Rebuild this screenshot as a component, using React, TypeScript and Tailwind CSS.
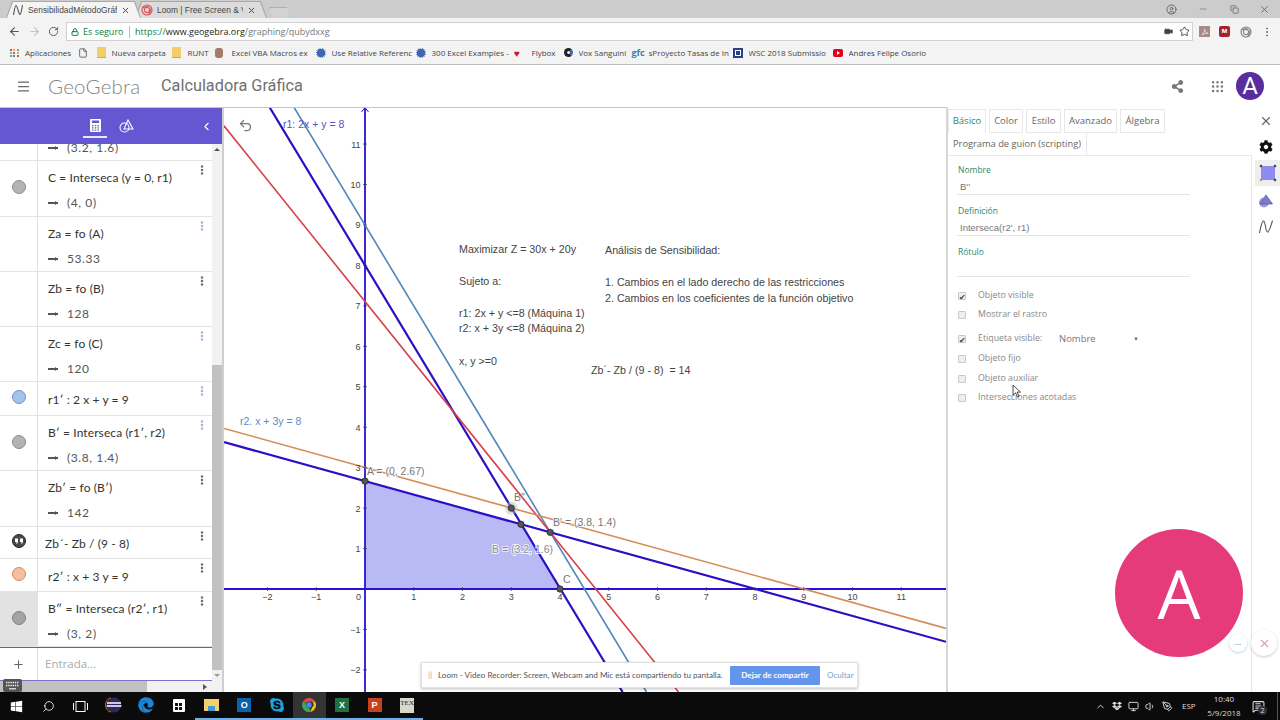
import { ChevronLeft, ChevronUp, EllipsisVertical, File, Lock, Menu, Minus, Plus, RotateCw, Search, Star, Undo2, Video, Volume1, X, ArrowLeft, ArrowRight, Monitor, Grip, PenTool, Copy, CircleUser, MessageSquareText } from "lucide-react";
import { FaCog, FaDropbox, FaEdge, FaShareAlt, FaSkype, FaWindows } from "react-icons/fa";
import type { ReactNode } from "react";

const sans = "font-['Open_Sans',sans-serif]";
const arial = "font-['Liberation_Sans',sans-serif]";
const lato = "font-['Lato',sans-serif]";

// graph scale, in page pixels
const px = (x: number) => 365 + 48.75 * x;
const py = (y: number) => 589 - 40.45 * y;

function LoomMark({ size = 12, color = "#e0565b" }: { size?: number; color?: string }) {
  return (
    <svg width={size} height={size} viewBox="0 0 12 12" fill="none" stroke={color} strokeWidth="1.2">
      <circle cx="6" cy="6" r="5" />
      <circle cx="6" cy="6" r="2.6" />
      <path d="M1.5 4 8 1.6M10.5 4 8 10.4" />
    </svg>
  );
}

function GgbCurve({ size = 12, color = "#555" }: { size?: number; color?: string }) {
  return (
    <svg width={size} height={size} viewBox="0 0 12 12" fill="none" stroke={color} strokeWidth="1.1">
      <path d="M1.5 11C2.5 5 3 1.5 4 1.5c1.5 0 2.5 9 4 9 1 0 1.5-4 2.5-9.5" />
    </svg>
  );
}

function BrowserTab({ title, wide, active, icon }: { title: string; wide: string; active?: boolean; icon: ReactNode }) {
  return (
    <div className={`${wide} h-[17px] -mr-[6px] bg-[#a9a9a9] p-[1px] pb-0 [clip-path:polygon(0_100%,6px_0,calc(100%-6px)_0,100%_100%)] ${active ? "z-10" : ""}`}>
      <div className={`h-full flex items-center pl-[5px] pr-[10px] gap-[4px] [clip-path:polygon(0_100%,6px_0,calc(100%-6px)_0,100%_100%)] ${active ? "bg-[#f4f4f4]" : "bg-[#dcdcdc]"}`}>
        {icon}
        <span className={`flex-1 whitespace-nowrap overflow-hidden text-[8.4px] text-[#444] ${arial}`}>{title}</span>
        <X size={9} strokeWidth={2.5} className="text-[#444]" />
      </div>
    </div>
  );
}

function TitleBar() {
  return (
    <div className={`h-[18px] bg-[#cccccc] flex items-end pl-[6px] ${sans}`}>
      <BrowserTab active wide="w-[135px]" title="SensibilidadMétodoGráfi" icon={<GgbCurve />} />
      <BrowserTab wide="w-[132px]" title="Loom | Free Screen & Vid" icon={<LoomMark />} />
      <div className="ml-[8px] w-[21px] h-[11px] border border-b-0 border-[#b0b0b0] bg-[#d2d2d2] [clip-path:polygon(0_0,85%_0,100%_100%,15%_100%)]" />
      <div className="ml-auto flex items-center self-stretch text-[#666]">
        <CircleUser size={11} />
        <Minus size={10} className="ml-[21px] text-[#888]" />
        <Copy size={9} className="ml-[22px]" strokeWidth={2} />
        <X size={11} className="ml-[20px] mr-[10px]" />
      </div>
    </div>
  );
}

function AddressBar() {
  return (
    <div className={`h-[23px] pt-[4px] bg-[#f3f3f3] flex items-center ${sans}`}>
      <ArrowLeft size={13} className="ml-[8px] text-[#555]" />
      <ArrowRight size={13} className="ml-[7px] text-[#c4c4c4]" />
      <RotateCw size={11} className="ml-[7px] text-[#555]" />
      <div className="ml-[7px] w-[1127px] h-[19px] bg-white border border-[#d0d0d0] flex items-center pl-[3px] text-[9px]">
        <Lock size={8} strokeWidth={3} className="text-[#0b8043] ml-[1px]" />
        <span className="ml-[4px] text-[#0b8043] w-[46px] whitespace-nowrap">Es seguro</span>
        <span className="w-px h-[12px] bg-[#bbb]" />
        <span className="ml-[5px] whitespace-nowrap">
          <span className="text-[#0b8043]">https://</span>
          <span className="text-[#222]">www.geogebra.org</span>
          <span className="text-[#777]">/graphing/qubydxxg</span>
        </span>
        <Video size={9} fill="#444" className="ml-auto text-[#444]" />
        <Star size={11} className="ml-[6px] mr-[2px] text-[#444]" />
      </div>
      <div className="ml-[6px] w-[11px] h-[11px] bg-[#a98a8a] flex items-center justify-center">
        <svg width="8" height="8" viewBox="0 0 8 8" fill="none" stroke="#eee" strokeWidth="0.7"><path d="M1 7C3 5 4 2 3.6 1 3 2 5 5 7 5.2 5 5 2.5 6 1 7z" /></svg>
      </div>
      <div className="ml-[9px] w-[11px] h-[11px] rounded-[2px] bg-[#a81f2d] text-white text-[7px] leading-[10px] font-bold text-center">м</div>
      <div className="ml-[10px]"><LoomMark size={12} color="#888" /></div>
      <EllipsisVertical size={12} className="ml-[9px] text-[#666]" />
    </div>
  );
}

const appDots = ["#d9534f", "#f0ad4e", "#5cb85c", "#5bc0de", "#d9534f", "#f0ad4e", "#5cb85c", "#428bca", "#d9534f"];

function Folder() {
  return <span className="block w-[9px] h-[11px] bg-[#f5cd6c] border-b border-[#d6a93f]" />;
}
function BlueSeal() {
  return <span className="block w-[10px] h-[10px] rounded-full bg-[#3f66b0] border border-dotted border-white" />;
}

const bookmarks: { label: string; box: string; text: string; icon: ReactNode }[] = [
  { label: "", box: "w-[18px]", text: "w-0", icon: <File size={10} className="text-[#555]" /> },
  { label: "Nueva carpeta", box: "w-[75px]", text: "ml-[4px] w-[56px]", icon: <Folder /> },
  { label: "RUNT", box: "w-[43px]", text: "ml-[5px] w-[24px]", icon: <Folder /> },
  { label: "Excel VBA Macros ex", box: "w-[102px]", text: "ml-[6px] w-[80px]", icon: <span className="block w-[8px] h-[10px] bg-[#a07c68] rounded-[3px]" /> },
  { label: "Use Relative Referenc", box: "w-[100px]", text: "ml-[4px] w-[82px]", icon: <BlueSeal /> },
  { label: "300 Excel Examples -", box: "w-[96px]", text: "ml-[4px] w-[78px]", icon: <BlueSeal /> },
  { label: "Flybox", box: "w-[51px]", text: "ml-[8px] w-[30px]", icon: <span className="text-[#c9143a] text-[10px] leading-none">♥</span> },
  { label: "Vox Sanguini", box: "w-[70px]", text: "ml-[4px] w-[52px]", icon: <span className="block w-[9px] h-[9px] rounded-full border-[3px] border-[#222] border-r-[#3f66b0]" /> },
  { label: "sProyecto Tasas de In", box: "w-[100px]", text: "ml-[4px] w-[82px]", icon: <span className="text-[#2d7fc1] text-[9px] font-bold leading-none">gfc</span> },
  { label: "WSC 2018 Submissio", box: "w-[100px]", text: "ml-[4px] w-[82px]", icon: <span className="block w-[10px] h-[10px] bg-[#26408b] border-x-2 border-[#26408b] outline outline-1 -outline-offset-3 outline-white" /> },
  { label: "Andres Felipe Osorio", box: "w-[96px]", text: "ml-[4px] w-[79px]", icon: <span className="w-[10px] h-[8px] rounded-[2px] bg-[#e3001b] flex items-center justify-center"><span className="w-0 h-0 border-y-[2px] border-y-transparent border-l-[3px] border-l-white" /></span> },
];

function BookmarksBar() {
  return (
    <div className={`h-[24px] bg-[#f3f3f3] border-b border-[#bdbdbd] flex items-center pl-[10px] text-[8px] text-[#444] ${sans}`}>
      <span className="grid grid-cols-3 gap-[1px] w-[9px]">
        {appDots.map((c, i) => (
          <span key={i} className="block w-[2px] h-[2px]" style={{ background: c }} />
        ))}
      </span>
      <span className="ml-[6px] w-[51.5px] whitespace-nowrap">Aplicaciones</span>
      {bookmarks.map((b, i) => (
        <div key={i} className={`${b.box} flex items-center shrink-0`}>
          <span className="w-[13px] shrink-0 flex justify-center">{b.icon}</span>
          {b.label && <span className={`${b.text} overflow-hidden whitespace-nowrap`}>{b.label}</span>}
        </div>
      ))}
    </div>
  );
}

function AppHeader() {
  return (
    <div className="h-[42px] bg-white flex items-center">
      <Menu size={15} className="ml-[16px] text-[#666]" />
      <span className={`ml-[17px] w-[113px] text-[20.5px] text-[#858585] font-light tracking-[0.2px] ${lato}`}>GeoGebra</span>
      <span className="text-[16.3px] text-[#707070] font-['Roboto',sans-serif]">Calculadora Gráfica</span>
      <FaShareAlt size={13} className="ml-auto text-[#777]" />
      <Grip size={15} className="ml-[26px] text-[#777]" />
      <div className="ml-[11px] mr-[16px] w-[28px] h-[28px] rounded-full bg-[#5a2d9c] text-white text-[24px] font-['Roboto',sans-serif] flex items-center justify-center">A</div>
    </div>
  );
}

type Row = {
  h: string;
  marble?: string;
  lines: string[];
  pale?: boolean;
  selected?: boolean;
  pl?: string;
  quote?: boolean;
};

const rows: Row[] = [
  { h: "h-[56px]", marble: "bg-[#b3b3b3] border-[#8c8c8c]", lines: ["C = Interseca (y = 0, r1)", "(4, 0)"] },
  { h: "h-[55px]", lines: ["Za = fo (A)", "53.33"], pale: true },
  { h: "h-[55px]", lines: ["Zb = fo (B)", "128"] },
  { h: "h-[55px]", lines: ["Zc = fo (C)", "120"], pale: true },
  { h: "h-[34px]", marble: "bg-[#a5c3ea] border-[#6f92c7]", lines: ["r1′ :  2 x + y = 9"], pale: true },
  { h: "h-[55px]", marble: "bg-[#b3b3b3] border-[#8c8c8c]", lines: ["B′ = Interseca (r1′, r2)", "(3.8, 1.4)"], pale: true },
  { h: "h-[56px]", lines: ["Zb′ = fo (B′)", "142"] },
  { h: "h-[32px]", quote: true, lines: ["Zb´- Zb  /  (9 - 8)"], pl: "pl-[7px]" },
  { h: "h-[33px]", marble: "bg-[#f3bfa3] border-[#d58a55]", lines: ["r2′ :  x + 3 y = 9"] },
  { h: "h-[55px]", marble: "bg-[#a3a3a3] border-[#808080]", lines: ["B″ = Interseca (r2′, r1)", "(3, 2)"], selected: true },
];

function Output({ value }: { value: string }) {
  return (
    <div className="h-[18px] flex items-center">
      <span className="w-[10px] h-[1.5px] bg-[#555] relative">
        <span className="absolute right-0 -top-[1px] w-0 h-0 border-y-[2px] border-y-transparent border-l-[3px] border-l-[#555]" />
      </span>
      <span className="ml-[9px] text-[#555] tracking-[0.6px]">{value}</span>
    </div>
  );
}

function AlgebraRow({ row }: { row: Row }) {
  const double = row.lines.length > 1;
  return (
    <div className={`${row.h} flex border-b border-[#e4e4e4]`}>
      <div className={`w-[38px] shrink-0 border-r border-[#e0e0e0] flex items-center justify-center ${row.selected ? "bg-[#e2e2e2]" : ""}`}>
        {row.marble && <span className={`block w-[14px] h-[14px] rounded-full border mb-[3px] ${row.marble}`} />}
        {row.quote && (
          <svg className="mb-[3px]" width="14" height="14" viewBox="0 0 14 14">
            <circle cx="7" cy="7" r="6.5" fill="#4a4a4a" stroke="#222" />
            <path d="M3 4.5h3v3c0 1.2-.6 2-1.6 2.3l-.3-.8c.5-.2.7-.5.7-1H3zM8 4.5h3v3c0 1.2-.6 2-1.6 2.3l-.3-.8c.5-.2.7-.5.7-1H8z" fill="#fff" />
          </svg>
        )}
      </div>
      <div className={`flex-1 flex flex-col text-[12px] text-[#333] whitespace-nowrap ${lato} ${row.pl ?? "pl-[10px]"} ${double ? "pt-[8px] gap-[7px]" : "justify-center pt-[3px]"}`}>
        {row.lines.map((l, i) => (i === 1 ? <Output key={i} value={l} /> : <div key={i} className="h-[18px] leading-[18px] tracking-[0.1px]">{l}</div>))}
      </div>
      <EllipsisVertical size={12} strokeWidth={3} className={`mt-[3px] mr-[4px] shrink-0 ${row.pale ? "text-[#a9a6de]" : "text-[#666]"}`} />
    </div>
  );
}

function AlgebraPanel() {
  return (
    <div className={`w-[224px] shrink-0 flex flex-col border-t border-[#c6c6c6] border-r-2 border-r-[#cfcfcf] bg-white ${sans}`}>
      <div className="h-[36px] bg-[#6557d2] flex items-start text-white shrink-0">
        <div className="ml-[83px] w-[24px] h-[30px] border-b-2 border-[#e8e6fa] flex items-center justify-center pt-[6px]">
          <svg width="11" height="13" viewBox="0 0 11 13">
            <rect width="11" height="13" rx="1" fill="#fff" />
            <rect x="2" y="1.5" width="7" height="2.5" fill="#6557d2" />
            <path d="M2 6h1.5v1.3H2zM4.8 6h1.5v1.3H4.8zM7.5 6H9v1.3H7.5zM2 8.2h1.5v1.3H2zM4.8 8.2h1.5v1.3H4.8zM7.5 8.2H9v1.3H7.5zM2 10.4h1.5v1.3H2zM4.8 10.4h1.5v1.3H4.8zM7.5 10.4H9v1.3H7.5z" fill="#6557d2" />
          </svg>
        </div>
        <svg className="ml-[12px] mt-[11px]" width="15" height="14" viewBox="0 0 15 14" fill="none" stroke="white" strokeWidth="1.1">
          <circle cx="5.5" cy="8.5" r="4.5" />
          <path d="M9 1 14 10H5z" />
        </svg>
        <ChevronLeft size={13} className="ml-[66px] mt-[12px]" />
      </div>
      <div className="flex-1 flex min-h-0">
        <div className="w-[212px] flex flex-col">
          <div className="h-[17px] flex border-b border-[#e4e4e4] overflow-hidden">
            <div className="w-[38px] border-r border-[#e0e0e0]" />
            <div className={`pl-[10px] text-[12px] -mt-[5px] ${lato}`}><Output value="(3.2, 1.6)" /></div>
          </div>
          {rows.map((r, i) => (
            <AlgebraRow key={i} row={r} />
          ))}
          <div className="h-[34px] flex border-y border-[#7c72c8] border-t-[#6557d2]">
            <div className="w-[38px] border-r border-[#e0e0e0] flex items-center justify-center text-[#666]"><Plus size={13} /></div>
            <div className="pl-[7px] flex items-center text-[11.5px] text-[#aaa]">Entrada...</div>
          </div>
          <div className="flex-1 bg-[#f1f1f1] flex items-center">
            <div className="w-[147px] h-full bg-[#c1c1c1]" />
            <span className="ml-auto mr-[5px] w-0 h-0 border-y-[3px] border-y-transparent border-l-[4px] border-l-[#555]" />
          </div>
        </div>
        <div className="w-[10px] bg-[#f1f1f1] flex flex-col items-center">
          <span className="mt-[4px] w-0 h-0 border-x-[3px] border-x-transparent border-b-[3px] border-b-[#555]" />
          <div className="mt-[214px] w-[10px] h-[305px] bg-[#c1c1c1]" />
          <span className="mt-[4px] w-0 h-0 border-x-[3px] border-x-transparent border-t-[3px] border-t-[#999]" />
        </div>
      </div>
    </div>
  );
}

const xTicks = [-2, -1, 1, 2, 3, 4, 5, 6, 7, 8, 9, 10, 11];
const yTicks = [-2, -1, 1, 2, 3, 4, 5, 6, 7, 8, 9, 10, 11];

const notes: [string, number, number][] = [
  ["Maximizar Z = 30x + 20y", 459, 253],
  ["Sujeto a:", 459, 285],
  ["r1: 2x + y <=8 (Máquina 1)", 459, 317],
  ["r2: x + 3y <=8 (Máquina 2)", 459, 332],
  ["x, y >=0", 459, 365],
  ["Análisis de Sensibilidad:", 605, 254],
  ["1. Cambios en el lado derecho de las restricciones", 605, 286],
  ["2. Cambios en los coeficientes de la función objetivo", 605, 302],
  ["Zb´- Zb / (9 - 8)  = 14", 591, 374],
];

const dots: [number, number][] = [[0, 2.667], [3.2, 1.6], [3.8, 1.4], [4, 0]];

function Graph() {
  return (
    <div className="flex-1 relative border-t border-[#c6c6c6] bg-white overflow-hidden">
      <svg className={`block w-full h-full ${arial}`} viewBox="224 108 722 584">
        <polygon points={`${px(0)},${py(0)} ${px(0)},${py(2.667)} ${px(3.2)},${py(1.6)} ${px(4)},${py(0)}`} fill="#b9b9f6" />
        <line x1="224" y1={py(0)} x2="946" y2={py(0)} stroke="#2a10d8" strokeWidth="1.8" />
        <line x1={px(0)} y1="107" x2={px(0)} y2="692" stroke="#2a10d8" strokeWidth="1.8" />
        <path d="M361.5 112 365 107.5 368.5 112" fill="none" stroke="#2a10d8" strokeWidth="1" />
        <line x1={px(-1.96)} y1="107" x2="622.6" y2="692" stroke="#2a10c4" strokeWidth="2.2" />
        <line x1={px(-1.46)} y1="107" x2="646.5" y2="692" stroke="#4f86b8" strokeWidth="1.6" />
        <line x1="224" y1={py(11.45)} x2="678.5" y2="692" stroke="#d8404a" strokeWidth="1.6" />
        <line x1="224" y1={py(3.63)} x2="946" y2="641.8" stroke="#2a10c4" strokeWidth="2.2" />
        <line x1="224" y1={py(3.97)} x2="946" y2="628.4" stroke="#d68b58" strokeWidth="1.6" />

        {xTicks.map((t) => (
          <g key={t}>
            <line x1={px(t)} y1={py(0) - 2} x2={px(t)} y2={py(0) + 2} stroke="#333" strokeWidth="0.7" />
            <text x={px(t)} y="600" textAnchor="middle" fontSize="9" fill="#444">{t < 0 ? `−${-t}` : t}</text>
          </g>
        ))}
        <text x="358.5" y="600" textAnchor="middle" fontSize="9" fill="#444">0</text>
        {yTicks.map((t) => (
          <g key={t}>
            <line x1={px(0) - 2} y1={py(t)} x2={px(0) + 2} y2={py(t)} stroke="#333" strokeWidth="0.7" />
            <text x="360.5" y={py(t) + 3.5} textAnchor="end" fontSize="9" fill="#444">{t < 0 ? `−${-t}` : t}</text>
          </g>
        ))}

        <text x="283" y="128" fontSize="10.5" fill="#5a4fd0">r1: 2x + y = 8</text>
        <text x="240" y="425" fontSize="10.5" fill="#5b8cc0">r2. x + 3y = 8</text>
        {notes.map(([t, x, y]) => (
          <text key={t} x={x} y={y} fontSize="10.7" fill="#444" xmlSpace="preserve">{t}</text>
        ))}

        <text x="367" y="475" fontSize="10.5" fill="#777" stroke="#fff" strokeWidth="1.4" paintOrder="stroke">A = (0, 2.67)</text>
        <text x="514" y="501" fontSize="10.5" fill="#777">B″</text>
        <text x="553" y="526" fontSize="10.5" fill="#777" stroke="#fff" strokeWidth="1.4" paintOrder="stroke">B′ = (3.8, 1.4)</text>
        <text x="492" y="553" fontSize="10.5" fill="#8a8a8a" stroke="#fff" strokeWidth="1.4" paintOrder="stroke">B = (3.2, 1.6)</text>
        <text x="563" y="583" fontSize="10.5" fill="#777">C</text>

        <circle cx={px(3)} cy={py(2)} r="6.5" fill="#bdbdbd" fillOpacity="0.45" />
        <circle cx={px(3)} cy={py(2)} r="3.2" fill="#555" stroke="#222" strokeWidth="0.7" />
        {dots.map(([x, y]) => (
          <circle key={x} cx={px(x)} cy={py(y)} r="3.2" fill="#555" stroke="#222" strokeWidth="0.7" />
        ))}
      </svg>
      <Undo2 size={15} className="absolute left-[14px] top-[10px] text-[#777]" />
      <div className={`absolute left-[197px] top-[554px] w-[437px] h-[26px] bg-white border border-[#e2e2e2] shadow-[0_1px_3px_rgba(0,0,0,0.25)] flex items-center text-[8.1px] text-[#555] ${lato}`}>
        <span className="ml-[6px] w-[10px] text-[#aaa]">||</span>
        <span className="w-[285px] whitespace-nowrap">Loom - Video Recorder: Screen, Webcam and Mic está compartiendo tu pantalla.</span>
        <span className="ml-[7px] w-[90px] h-[19px] rounded-[1px] bg-[#6495ed] text-white font-bold flex items-center justify-center">Dejar de compartir</span>
        <span className="ml-[7px] text-[#7c9ccb]">Ocultar</span>
      </div>
    </div>
  );
}

const tabs: { label: string; w: string; active?: boolean }[] = [
  { label: "Básico", w: "w-[38px]", active: true },
  { label: "Color", w: "w-[34px]" },
  { label: "Estilo", w: "w-[35px]" },
  { label: "Avanzado", w: "w-[53px]" },
  { label: "Álgebra", w: "w-[45px]" },
];

function Field({ label, value }: { label: string; value?: string }) {
  return (
    <div className="mb-[10px]">
      <div className="h-[12px] ml-[1px] leading-[12px] text-[8.5px] text-[#2a8a6c]">{label}</div>
      <div className={`h-[17px] mt-[2px] w-[233px] border-b border-[#e4e4e4] pl-[3px] pt-[2px] text-[9.5px] leading-[14px] text-[#777] ${arial}`}>{value}</div>
    </div>
  );
}

const checks: { label: string; mt: string; on?: boolean }[] = [
  { label: "Objeto visible", mt: "mt-[13px]", on: true },
  { label: "Mostrar el rastro", mt: "mt-[7px]" },
  { label: "Etiqueta visible:", mt: "mt-[12px]", on: true },
  { label: "Objeto fijo", mt: "mt-[8px]" },
  { label: "Objeto auxiliar", mt: "mt-[8px]" },
  { label: "Intersecciones acotadas", mt: "mt-[7px]" },
];

function PropertiesPanel() {
  return (
    <div className={`flex-1 flex bg-white border-l-2 border-[#d6d6d6] relative ${sans}`}>
      <div className="w-[304px] flex flex-col">
        <div className="flex h-[26px] gap-[3px] pt-[2px]">
          {tabs.map((t) => (
            <div key={t.label} className={`${t.w} border border-[#e8e8e8] flex items-center justify-center text-[9.5px] ${t.active ? "text-[#1f8a68] border-b-white" : "text-[#666]"}`}>
              {t.label}
            </div>
          ))}
        </div>
        <div className="h-[22px] w-[139px] border-r border-[#e8e8e8] flex items-center pl-[5px] text-[9.3px] text-[#666] whitespace-nowrap">Programa de guion (scripting)</div>
        <div className="flex-1 border-t border-r border-[#e8e8e8] pl-[9px] pt-[8px]">
          <Field label="Nombre" value="B''" />
          <Field label="Definición" value="Interseca(r2', r1)" />
          <Field label="Rótulo" />
          {checks.map((c) => (
            <div key={c.label} className={`${c.mt} h-[12px] flex items-center text-[8.8px] text-[#888]`}>
              <span className="w-[8px] h-[8px] mr-[12px] ml-[1px] rounded-[1px] border border-[#c9c9c9] bg-[#eeeeee] text-[8px] leading-[7px] text-[#444] text-center">{c.on ? "✔" : ""}</span>
              <span className="w-[81px] whitespace-nowrap">{c.label}</span>
              {c.on && c.label.startsWith("Etiqueta") && (
                <span className="w-[80px] flex items-center text-[9.5px] text-[#777]">Nombre<span className="ml-auto text-[6px]">▼</span></span>
              )}
            </div>
          ))}
        </div>
      </div>
      <div className="flex-1 flex flex-col items-center">
        <X size={14} className="mt-[7px] text-[#666]" />
        <FaCog size={14} className="mt-[12px] text-[#111]" />
        <div className="mt-[6px] ml-[3px] w-[25px] h-[26px] bg-[#eeeeee] flex items-center justify-center">
          <svg width="18" height="18" viewBox="0 0 18 18">
            <rect x="2" y="2" width="14" height="14" fill="#8b8bf0" />
            <circle cx="2" cy="2" r="1.3" fill="#444" />
            <circle cx="16" cy="2" r="1.3" fill="#444" />
            <circle cx="2" cy="16" r="1.3" fill="#b5a642" />
            <circle cx="16" cy="16" r="1.3" fill="#444" />
          </svg>
        </div>
        <svg className="mt-[8px]" width="16" height="14" viewBox="0 0 16 14">
          <circle cx="6" cy="8.5" r="5" fill="#9a9adf" />
          <path d="M8 1 14.5 10H2z" fill="#7c7cc8" stroke="#55559f" strokeWidth="0.7" />
        </svg>
        <svg className="mt-[11px]" width="16" height="16" viewBox="0 0 16 16" fill="none" stroke="#555" strokeWidth="1.1">
          <path d="M1.5 14C3 6 4 2 5.5 2c2 0 2 11 4 11 2 0 3-5 5-11.5" />
          <circle cx="5" cy="2.5" r="1" fill="#7d7dc8" stroke="none" />
          <circle cx="10" cy="12.5" r="1" fill="#7d7dc8" stroke="none" />
        </svg>
      </div>
    </div>
  );
}

function ChromeBall() {
  return (
    <svg width="14" height="14" viewBox="0 0 20 20">
      <path d="M10 0a10 10 0 0 1 8.7 5H10a5 5 0 0 0-4.6 3L2.5 3.4A10 10 0 0 1 10 0z" fill="#dd4b3e" />
      <path d="M18.7 5a10 10 0 0 1-7.4 14.9L15 13a5 5 0 0 0-.8-8z" fill="#f4c20d" />
      <path d="M11.3 19.9A10 10 0 0 1 2.5 3.4L6 10a5 5 0 0 0 5.5 5z" fill="#3aa757" />
      <circle cx="10" cy="10" r="3.8" fill="#4a8af4" />
    </svg>
  );
}

function LetterTile({ bg, letter }: { bg: string; letter: string }) {
  return (
    <span className={`w-[14px] h-[14px] ${bg} text-white text-[9px] font-bold leading-[14px] text-center ${arial}`}>{letter}</span>
  );
}

const running: { icon: ReactNode; on?: boolean; active?: boolean }[] = [
  { icon: <svg width="20" height="16" viewBox="0 0 20 16"><circle cx="10" cy="8" r="7.5" fill="#2c2a5a" /><path d="M3 6h14M2.6 9h14.8" stroke="#fff" strokeWidth="1.4" /><path d="M7 .8A7.5 7.5 0 0 0 7 15.2" fill="none" stroke="#e08a2c" strokeWidth="0.8" /></svg> },
  { icon: <FaEdge size={16} className="text-[#1a86d9]" /> },
  { icon: <span className="w-[12px] h-[13px] bg-white flex flex-wrap gap-[1px] p-[2px] pt-[4px] rounded-[1px]"><span className="w-[3px] h-[3px] bg-[#111]" /><span className="w-[3px] h-[3px] bg-[#111]" /><span className="w-[3px] h-[3px] bg-[#111]" /><span className="w-[3px] h-[3px] bg-[#111]" /></span> },
  { on: true, icon: <span className="w-[15px] h-[12px] bg-[#f4cf6d] flex items-end justify-center"><span className="w-[7px] h-[5px] bg-[#3f9bd0]" /></span> },
  { on: true, icon: <LetterTile bg="bg-[#0b62a8]" letter="O" /> },
  { on: true, icon: <FaSkype size={16} className="text-[#1aa3dc]" /> },
  { on: true, active: true, icon: <ChromeBall /> },
  { on: true, icon: <LetterTile bg="bg-[#1e7145]" letter="X" /> },
  { on: true, icon: <LetterTile bg="bg-[#c9401f]" letter="P" /> },
  { on: true, icon: <span className="w-[14px] h-[15px] bg-[#d8d8c8] text-[#222] text-[7px] leading-[10px] text-center font-['Liberation_Serif',serif]">TEX</span> },
];

function Taskbar() {
  return (
    <div className="h-[28px] bg-[#0b0b0b] flex items-center text-white">
      <div className="w-[32px] flex justify-center"><FaWindows size={13} /></div>
      <div className="w-[32px] flex justify-center"><Search size={13} strokeWidth={1.5} className="-scale-x-100" /></div>
      <div className="w-[33.5px] flex justify-center">
        <svg width="15" height="11" viewBox="0 0 15 11" fill="none" stroke="#fff" strokeWidth="1">
          <rect x="3" y="0.5" width="9" height="10" />
          <path d="M0.5 2v7M14.5 2v7" />
        </svg>
      </div>
      {running.map((r, i) => (
        <div key={i} className={`w-[32.6px] h-full flex items-center justify-center border-b-2 ${r.on ? "border-[#6fb0e8]" : "border-transparent"} ${r.active ? "bg-[#343434]" : ""}`}>
          {r.icon}
        </div>
      ))}
      <div className={`ml-auto self-stretch flex items-center text-[#ddd] ${sans}`}>
        <ChevronUp size={11} />
        <FaDropbox size={10} className="ml-[6.5px]" />
        <Monitor size={11} className="ml-[5.5px]" />
        <Volume1 size={11} className="ml-[6px]" />
        <PenTool size={11} className="ml-[6px]" />
        <span className="ml-[9.5px] w-[14px] text-[8px]">ESP</span>
        <div className="ml-[11px] w-[34px] text-center text-[8px] leading-[14px]">
          <div>10:40</div>
          <div>5/9/2018</div>
        </div>
        <div className="ml-[9px] w-[16px] flex justify-center relative">
          <MessageSquareText size={13} />
          <span className="absolute -right-[1px] top-[6px] w-[9px] h-[9px] rounded-full bg-[#333] text-[7px] leading-[9px] text-center">2</span>
        </div>
        <span className="ml-[11px] mr-[2px] w-px h-full bg-[#555]" />
      </div>
    </div>
  );
}

function Overlays() {
  return (
    <>
      <div className="absolute left-[1115px] top-[529px] w-[128px] h-[128px] rounded-full bg-[#e63b7a] text-white text-[68px] font-['Open_Sans',sans-serif] flex items-center justify-center">A</div>
      <div className="absolute left-[1229px] top-[634px] w-[18px] h-[18px] rounded-full bg-white shadow-[0_1px_3px_rgba(0,0,0,0.2)] flex items-center justify-center text-[#777]">
        <span className="text-[8px] leading-none -mt-[3px]">...</span>
      </div>
      <div className="absolute left-[1251px] top-[630px] w-[26px] h-[26px] rounded-full bg-white shadow-[0_1px_3px_rgba(0,0,0,0.2)] flex items-center justify-center">
        <X size={13} className="text-[#e0a0a0]" />
      </div>
      <svg className="absolute left-[1012px] top-[384px]" width="10" height="14" viewBox="0 0 10 14">
        <path d="M1 1v10l2.5-2.2L5.5 13l1.6-.7-2-4.2H8.5z" fill="#fff" stroke="#222" strokeWidth="0.8" />
      </svg>
      <svg className="absolute left-[3px] top-[679px]" width="19" height="13" viewBox="0 0 19 13">
        <rect width="19" height="13" rx="2" fill="#555" />
        <path d="M3 3.5h13M3 6.5h13" stroke="#eee" strokeWidth="1.6" strokeDasharray="1.4 0.8" />
        <path d="M6 9.8h7" stroke="#eee" strokeWidth="1.2" />
      </svg>
    </>
  );
}

export default function App() {
  return (
    <div className="w-[1280px] h-[720px] overflow-hidden flex flex-col relative bg-white">
      <TitleBar />
      <AddressBar />
      <BookmarksBar />
      <AppHeader />
      <div className="flex-1 flex min-h-0">
        <AlgebraPanel />
        <div className="w-[722px] flex"><Graph /></div>
        <PropertiesPanel />
      </div>
      <Taskbar />
      <Overlays />
    </div>
  );
}
